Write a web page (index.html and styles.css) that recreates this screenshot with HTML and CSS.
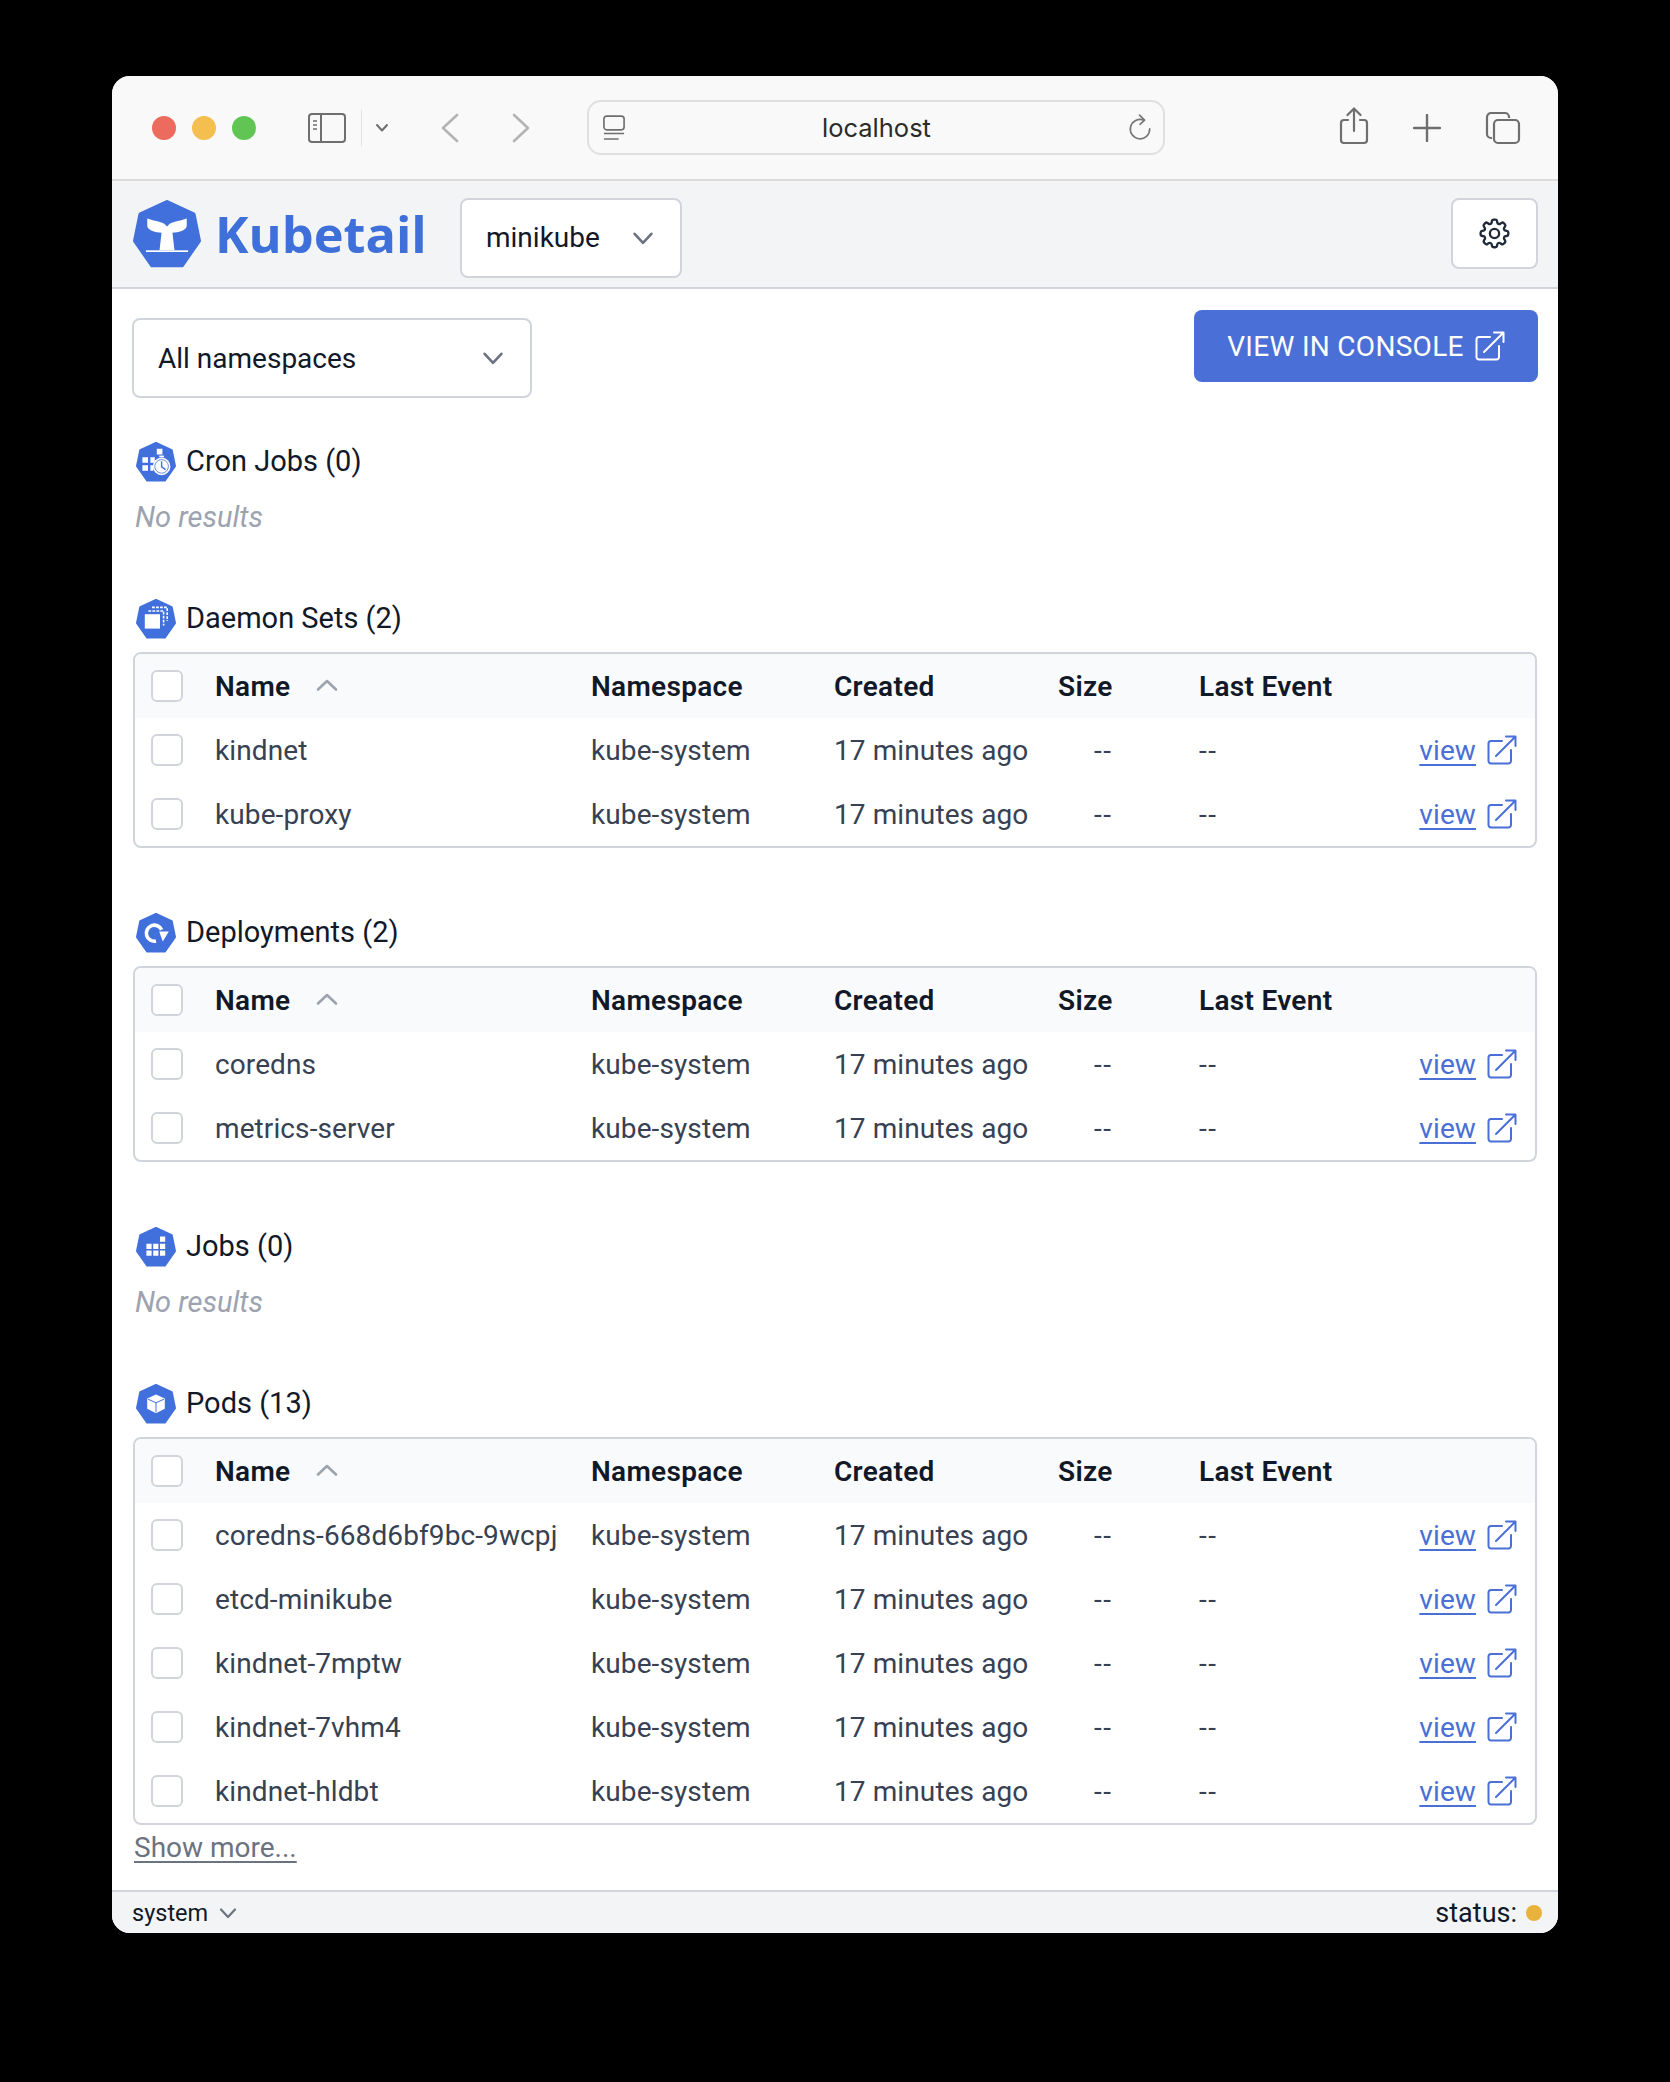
FILE: index.html
```html
<!DOCTYPE html>
<html lang="en">

<head>
    <meta charset="UTF-8" />
    <title>Kubetail</title>
    <link rel="stylesheet" href="styles.css">
</head>

<body>
    <svg class="defs" width="0" height="0">
        <defs>
            <symbol id="hept" viewBox="0 0 100 100">
                <path d="M50 3 L89 21 L97 60 L72 96 L28 96 L3 60 L11 21 Z" fill="#4170dc" stroke="#4170dc" stroke-width="6" stroke-linejoin="round" />
            </symbol>
            <symbol id="ext" viewBox="0 0 30 30">
                <path d="M15 6H4a2.500 2.500 0 0 0-2.500 2.500V26A2.500 2.500 0 0 0 4 28.500h17.500A2.500 2.500 0 0 0 24 26V15M9 21 28 2M19 1.500h9.500V11" fill="none" stroke="currentColor" stroke-width="2" stroke-linecap="round" stroke-linejoin="round" />
            </symbol>
            <symbol id="chev" viewBox="0 0 20 20">
                <path d="M3 6.500 10 14l7-7.500" fill="none" stroke="currentColor" stroke-width="2.200" stroke-linecap="round" stroke-linejoin="round" />
            </symbol>
        </defs>
    </svg>

    <div class="window">
        <div class="toolbar">
            <div class="lights">
                <span class="light red"></span>
                <span class="light yellow"></span>
                <span class="light green"></span>
            </div>
            <svg class="tb-icon sidebar-icon" viewBox="0 0 38 30"><rect x="1" y="1" width="36" height="28" rx="3" fill="none" stroke="#6f6f6f" stroke-width="2" /><path d="M13 1v28" stroke="#6f6f6f" stroke-width="2" /><path d="M5 8h4M5 12h4M5 16h4" stroke="#6f6f6f" stroke-width="1.600" /></svg>
            <span class="tb-sep"></span>
            <svg class="tb-chev" viewBox="0 0 14 10"><path d="M2 2l5 5.500L12 2" fill="none" stroke="#6f6f6f" stroke-width="2" stroke-linecap="round" stroke-linejoin="round" /></svg>
            <svg class="tb-nav" viewBox="0 0 20 30"><path d="M17 2 3 15l14 13" fill="none" stroke="#b4b4b4" stroke-width="2.600" stroke-linecap="round" stroke-linejoin="round" /></svg>
            <svg class="tb-nav forward" viewBox="0 0 20 30"><path d="m3 2 14 13L3 28" fill="none" stroke="#b4b4b4" stroke-width="2.600" stroke-linecap="round" stroke-linejoin="round" /></svg>
            <div class="address">
                <svg class="site-icon" viewBox="0 0 24 28"><rect x="1" y="1" width="22" height="15" rx="3" fill="none" stroke="#6f6f6f" stroke-width="1.800" /><path d="M1 20h22M1 26h16" stroke="#6f6f6f" stroke-width="1.800" /></svg>
                <span class="address-text">localhost</span>
                <svg class="reload" viewBox="0 0 26 30"><path d="M17 6.500A10.500 10.500 0 1 0 23.500 16" fill="none" stroke="#777" stroke-width="1.800" stroke-linecap="round" /><path d="M12.500 1 18 6.500 13 11" fill="none" stroke="#777" stroke-width="1.800" stroke-linecap="round" stroke-linejoin="round" /></svg>
            </div>
            <div class="tb-right">
                <svg class="share" viewBox="0 0 30 38"><path d="M9 13H5a3 3 0 0 0-3 3v17a3 3 0 0 0 3 3h20a3 3 0 0 0 3-3V16a3 3 0 0 0-3-3h-4M15 24V2M8.500 8 15 1.500 21.500 8" fill="none" stroke="#6f6f6f" stroke-width="2.200" stroke-linecap="round" stroke-linejoin="round" /></svg>
                <svg class="plus" viewBox="0 0 28 28"><path d="M14 1v26M1 14h26" fill="none" stroke="#6f6f6f" stroke-width="2.400" stroke-linecap="round" /></svg>
                <svg class="tabs" viewBox="0 0 36 34"><path d="M7 27H6a4 4 0 0 1-4-4V6a4 4 0 0 1 4-4h14a4 4 0 0 1 4 4v1" fill="none" stroke="#6f6f6f" stroke-width="2.200" /><rect x="9" y="9" width="25" height="23" rx="4" fill="none" stroke="#6f6f6f" stroke-width="2.200" /></svg>
            </div>
        </div>

        <header class="app-header">
            <svg class="logo" viewBox="0 0 100 100">
                <use href="#hept" />
                <path d="M21 27C26 30 38 31 46 35L50 39 54 35C62 31 74 30 79 27V38C79 45 66 48 58 48L61 74H39L42 48C34 48 21 45 21 38Z" fill="#fff" />
                <rect x="19" y="74" width="62" height="2.500" fill="#fff" />
            </svg>
            <span class="brand">Kubetail</span>
            <button class="select cluster-select">minikube <svg class="select-chev"><use href="#chev" /></svg></button>
            <button class="gear-btn">
                <svg class="gear" viewBox="0 0 24 24"><path d="M10.340 3.940c.090-.540.560-.940 1.110-.940h1.100c.550 0 1.020.400 1.110.940l.150.890c.070.420.380.760.770.920.390.160.840.140 1.190-.110l.730-.520c.450-.320 1.060-.270 1.450.120l.770.780c.390.390.440 1 .120 1.450l-.520.730c-.250.350-.270.800-.110 1.190.160.390.500.700.920.770l.890.150c.540.090.940.560.940 1.110v1.090c0 .550-.400 1.020-.940 1.110l-.890.150c-.420.070-.760.380-.920.770-.160.390-.140.840.110 1.190l.520.730c.320.450.270 1.060-.120 1.450l-.770.770c-.390.390-1 .440-1.450.120l-.730-.520c-.350-.250-.800-.270-1.190-.110-.390.160-.700.500-.770.920l-.150.890c-.090.540-.560.940-1.110.940h-1.100c-.550 0-1.020-.400-1.110-.940l-.150-.890c-.070-.420-.380-.760-.770-.920-.390-.160-.840-.140-1.190.110l-.730.520c-.450.320-1.060.270-1.450-.120l-.770-.770c-.390-.390-.440-1-.120-1.450l.520-.730c.250-.350.270-.800.110-1.190-.160-.390-.500-.700-.920-.770l-.890-.150C3.400 13.570 3 13.100 3 12.550v-1.090c0-.550.400-1.020.940-1.110l.890-.150c.420-.070.760-.380.920-.770.160-.390.140-.840-.110-1.190l-.520-.730c-.320-.450-.270-1.060.120-1.450l.770-.780c.390-.390 1-.440 1.450-.120l.730.520c.350.250.800.270 1.190.110.390-.160.700-.500.770-.920z" fill="none" stroke="#1f2937" stroke-width="1.500" /><circle cx="12" cy="12" r="3" fill="none" stroke="#1f2937" stroke-width="1.500" /></svg>
            </button>
        </header>

        <main class="content">
            <div class="top-row">
                <button class="select ns-select">All namespaces <svg class="select-chev"><use href="#chev" /></svg></button>
                <button class="console-btn">VIEW IN CONSOLE <svg class="console-icon"><use href="#ext" /></svg></button>
            </div>

            <section class="group">
                <h3 class="group-title">
                    <svg class="kind-icon" viewBox="0 0 100 100">
                        <use href="#hept" />
                        <path d="M52 17h14v14H52zM16 38h14v14H16zM36 38h11v14H36zM16 58h14v14H16zM36 58h7v14h-7z" fill="#fff" />
                        <circle cx="64" cy="61" r="22" fill="#fff" />
                        <circle cx="64" cy="61" r="17" fill="none" stroke="#4170dc" stroke-width="2" />
                        <path d="M64 48v14l10 7" fill="none" stroke="#4170dc" stroke-width="3.500" />
                        <rect x="58" y="34" width="12" height="4" fill="#fff" />
                    </svg>
                    Cron Jobs (0)
                </h3>
                <p class="no-results">No results</p>
            </section>

            <section class="group">
                <h3 class="group-title">
                    <svg class="kind-icon" viewBox="0 0 100 100">
                        <use href="#hept" />
                        <path d="M40 21h38v34" fill="none" stroke="#fff" stroke-width="4" stroke-dasharray="7 3" />
                        <path d="M31 30h38v36" fill="none" stroke="#fff" stroke-width="4" stroke-dasharray="7 3" />
                        <path d="M22 38h38v36H22z" fill="#fff" />
                    </svg>
                    Daemon Sets (2)
                </h3>
                <div class="table-wrap">
                    <table>
                        <thead>
                            <tr>
                                <th class="col-check"><span class="checkbox"></span></th>
                                <th class="col-name">Name <svg class="sort-icon" viewBox="0 0 22 14"><path d="M2 11.500 11 3l9 8.500" fill="none" stroke="#9ca3af" stroke-width="2.600" stroke-linecap="round" stroke-linejoin="round" /></svg></th>
                                <th class="col-ns">Namespace</th>
                                <th class="col-created">Created</th>
                                <th class="col-size">Size</th>
                                <th class="col-event">Last Event</th>
                                <th class="col-view"></th>
                            </tr>
                        </thead>
                        <tbody>
                            <tr>
                                <td><span class="checkbox"></span></td>
                                <td>kindnet</td>
                                <td>kube-system</td>
                                <td>17 minutes ago</td>
                                <td class="dash size-dash">--</td>
                                <td class="dash">--</td>
                                <td class="view-cell"><a class="view-link">view</a><svg class="view-icon"><use href="#ext" /></svg></td>
                            </tr>
                            <tr>
                                <td><span class="checkbox"></span></td>
                                <td>kube-proxy</td>
                                <td>kube-system</td>
                                <td>17 minutes ago</td>
                                <td class="dash size-dash">--</td>
                                <td class="dash">--</td>
                                <td class="view-cell"><a class="view-link">view</a><svg class="view-icon"><use href="#ext" /></svg></td>
                            </tr>
                        </tbody>
                    </table>
                </div>
            </section>

            <section class="group">
                <h3 class="group-title">
                    <svg class="kind-icon" viewBox="0 0 100 100">
                        <use href="#hept" />
                        <path d="M64 42A20 20 0 1 0 50 70" fill="none" stroke="#fff" stroke-width="9" />
                        <path d="M58 46 L82 46 L67 71 Z" fill="#fff" />
                    </svg>
                    Deployments (2)
                </h3>
                <div class="table-wrap">
                    <table>
                        <thead>
                            <tr>
                                <th class="col-check"><span class="checkbox"></span></th>
                                <th class="col-name">Name <svg class="sort-icon" viewBox="0 0 22 14"><path d="M2 11.500 11 3l9 8.500" fill="none" stroke="#9ca3af" stroke-width="2.600" stroke-linecap="round" stroke-linejoin="round" /></svg></th>
                                <th class="col-ns">Namespace</th>
                                <th class="col-created">Created</th>
                                <th class="col-size">Size</th>
                                <th class="col-event">Last Event</th>
                                <th class="col-view"></th>
                            </tr>
                        </thead>
                        <tbody>
                            <tr>
                                <td><span class="checkbox"></span></td>
                                <td>coredns</td>
                                <td>kube-system</td>
                                <td>17 minutes ago</td>
                                <td class="dash size-dash">--</td>
                                <td class="dash">--</td>
                                <td class="view-cell"><a class="view-link">view</a><svg class="view-icon"><use href="#ext" /></svg></td>
                            </tr>
                            <tr>
                                <td><span class="checkbox"></span></td>
                                <td>metrics-server</td>
                                <td>kube-system</td>
                                <td>17 minutes ago</td>
                                <td class="dash size-dash">--</td>
                                <td class="dash">--</td>
                                <td class="view-cell"><a class="view-link">view</a><svg class="view-icon"><use href="#ext" /></svg></td>
                            </tr>
                        </tbody>
                    </table>
                </div>
            </section>

            <section class="group">
                <h3 class="group-title">
                    <svg class="kind-icon" viewBox="0 0 100 100">
                        <use href="#hept" />
                        <path d="M60 24h13v13H60zM26 42h13v13H26zM43 42h13v13H43zM60 42h13v13H60zM26 59h13v13H26zM43 59h13v13H43zM60 59h13v13H60z" fill="#fff" />
                    </svg>
                    Jobs (0)
                </h3>
                <p class="no-results">No results</p>
            </section>

            <section class="group last-group">
                <h3 class="group-title">
                    <svg class="kind-icon" viewBox="0 0 100 100">
                        <use href="#hept" />
                        <path d="M50 26 72 36V62L50 73 28 62V36Z" fill="#fff" />
                        <path d="M30 38 50 47 70 38M50 47V71" fill="none" stroke="#4170dc" stroke-width="2.500" />
                    </svg>
                    Pods (13)
                </h3>
                <div class="table-wrap">
                    <table>
                        <thead>
                            <tr>
                                <th class="col-check"><span class="checkbox"></span></th>
                                <th class="col-name">Name <svg class="sort-icon" viewBox="0 0 22 14"><path d="M2 11.500 11 3l9 8.500" fill="none" stroke="#9ca3af" stroke-width="2.600" stroke-linecap="round" stroke-linejoin="round" /></svg></th>
                                <th class="col-ns">Namespace</th>
                                <th class="col-created">Created</th>
                                <th class="col-size">Size</th>
                                <th class="col-event">Last Event</th>
                                <th class="col-view"></th>
                            </tr>
                        </thead>
                        <tbody>
                            <tr>
                                <td><span class="checkbox"></span></td>
                                <td>coredns-668d6bf9bc-9wcpj</td>
                                <td>kube-system</td>
                                <td>17 minutes ago</td>
                                <td class="dash size-dash">--</td>
                                <td class="dash">--</td>
                                <td class="view-cell"><a class="view-link">view</a><svg class="view-icon"><use href="#ext" /></svg></td>
                            </tr>
                            <tr>
                                <td><span class="checkbox"></span></td>
                                <td>etcd-minikube</td>
                                <td>kube-system</td>
                                <td>17 minutes ago</td>
                                <td class="dash size-dash">--</td>
                                <td class="dash">--</td>
                                <td class="view-cell"><a class="view-link">view</a><svg class="view-icon"><use href="#ext" /></svg></td>
                            </tr>
                            <tr>
                                <td><span class="checkbox"></span></td>
                                <td>kindnet-7mptw</td>
                                <td>kube-system</td>
                                <td>17 minutes ago</td>
                                <td class="dash size-dash">--</td>
                                <td class="dash">--</td>
                                <td class="view-cell"><a class="view-link">view</a><svg class="view-icon"><use href="#ext" /></svg></td>
                            </tr>
                            <tr>
                                <td><span class="checkbox"></span></td>
                                <td>kindnet-7vhm4</td>
                                <td>kube-system</td>
                                <td>17 minutes ago</td>
                                <td class="dash size-dash">--</td>
                                <td class="dash">--</td>
                                <td class="view-cell"><a class="view-link">view</a><svg class="view-icon"><use href="#ext" /></svg></td>
                            </tr>
                            <tr>
                                <td><span class="checkbox"></span></td>
                                <td>kindnet-hldbt</td>
                                <td>kube-system</td>
                                <td>17 minutes ago</td>
                                <td class="dash size-dash">--</td>
                                <td class="dash">--</td>
                                <td class="view-cell"><a class="view-link">view</a><svg class="view-icon"><use href="#ext" /></svg></td>
                            </tr>
                        </tbody>
                    </table>
                </div>
                <a class="show-more">Show more...</a>
            </section>
        </main>

        <footer class="app-footer">
            <span class="theme">system <svg class="theme-chev"><use href="#chev" /></svg></span>
            <span class="status">status: <span class="status-dot"></span></span>
        </footer>
    </div>
</body>

</html>
```

FILE: styles.css
```css
* {
    box-sizing: border-box;
    font-family: 'Roboto', sans-serif;
}

html {
    background: #000;
}

body {
    margin: 0;
    padding: 76px 112px 149px;
    background: #000;
    color: #111827;
}

.defs {
    position: absolute;
}

.window {
    height: 1857px;
    display: flex;
    flex-direction: column;
    background: #fff;
    border-radius: 18px;
    overflow: hidden;
}

/* browser chrome */
.toolbar {
    height: 105px;
    flex: none;
    display: flex;
    align-items: center;
    padding: 0 0 0 40px;
    background: #f9f9fa;
    border-bottom: 2px solid #dcdcdc;
}

.lights {
    display: flex;
    gap: 16px;
}

.light {
    width: 24px;
    height: 24px;
    border-radius: 50%;
}

.red { background: #ec6a5e; }
.yellow { background: #f4bf4f; }
.green { background: #61c554; }

.tb-icon {
    width: 38px;
    height: 30px;
    margin-left: 52px;
}

.tb-sep {
    width: 1px;
    height: 36px;
    margin-left: 15px;
    background: #e2e2e2;
}

.tb-chev {
    width: 14px;
    height: 10px;
    margin-left: 13px;
}

.tb-nav {
    width: 20px;
    height: 30px;
    margin-left: 51px;
}

.tb-nav.forward {
    margin-left: 51px;
}

.address {
    width: 578px;
    height: 55px;
    margin-left: 56px;
    display: flex;
    align-items: center;
    padding: 0 11px 0 14px;
    border: 2px solid #e0e0e0;
    border-radius: 14px;
}

.site-icon {
    width: 22px;
    height: 28px;
}

.address-text {
    flex: 1;
    text-align: center;
    font-family: 'Inter', sans-serif;
    font-size: 25.500px;
    color: #2b2b2b;
}

.reload {
    width: 24px;
    height: 28px;
}

.tb-right {
    display: flex;
    align-items: center;
    margin-left: 174px;
    gap: 44px;
}

.share {
    width: 30px;
    height: 38px;
    margin-top: -4px;
}

.plus {
    width: 28px;
    height: 28px;
}

.tabs {
    width: 36px;
    height: 34px;
}

/* app header */
.app-header {
    height: 108px;
    flex: none;
    display: flex;
    align-items: center;
    padding: 0 20px;
    background: #f3f4f6;
    border-bottom: 2px solid #d1d5db;
}

.logo {
    width: 70px;
    height: 68px;
}

.brand {
    margin-left: 13px;
    width: 229px;
    font-family: 'Open Sans', sans-serif;
    font-size: 50.500px;
    font-weight: 700;
    color: #3f6fd8;
    line-height: 1;
}

.select {
    display: flex;
    align-items: center;
    justify-content: space-between;
    height: 80px;
    padding: 0 25px 0 24px;
    background: #fff;
    border: 2px solid #d1d5db;
    border-radius: 8px;
    font-size: 28px;
    color: #111827;
}

.cluster-select {
    width: 222px;
    margin-left: 16px;
    margin-top: 7px;
}

.select-chev {
    width: 24px;
    height: 24px;
    color: #6b7280;
}

.gear-btn {
    width: 87px;
    height: 71px;
    margin-left: auto;
    margin-top: -1px;
    display: flex;
    align-items: center;
    justify-content: center;
    padding: 0;
    background: #fff;
    border: 2px solid #d1d5db;
    border-radius: 8px;
}

.gear {
    width: 37px;
    height: 37px;
}

/* content */
.content {
    flex: 1;
    min-height: 0;
    padding: 21px 20px 0;
}

.top-row {
    display: flex;
    justify-content: space-between;
    align-items: flex-start;
    height: 132px;
}

.ns-select {
    width: 400px;
    margin-top: 8px;
}

.console-btn {
    display: flex;
    align-items: center;
    justify-content: center;
    gap: 11px;
    width: 344px;
    height: 72px;
    border: none;
    border-radius: 8px;
    background: #4a6fd6;
    color: #fff;
    font-size: 28px;
    letter-spacing: 0.300px;
}

.console-icon {
    width: 30px;
    height: 30px;
}

.group {
    margin-bottom: 65px;
}

.last-group {
    margin-bottom: 0;
}

.group-title {
    display: flex;
    align-items: center;
    gap: 9px;
    height: 40px;
    padding-bottom: 3px;
    margin: 0 0 13px 3px;
    font-size: 29px;
    font-weight: 400;
    color: #111827;
}

.kind-icon {
    width: 42px;
    height: 40px;
    margin-top: 3px;
    flex: none;
}

.no-results {
    margin: 0 0 0 3px;
    height: 39px;
    line-height: 44px;
    font-size: 29px;
    font-style: italic;
    color: #9ca3af;
}

.table-wrap {
    margin: 0 1px;
    border: 2px solid #d1d5db;
    border-radius: 8px;
    overflow: hidden;
}

table {
    width: 100%;
    border-collapse: collapse;
    table-layout: fixed;
}

th,
td {
    padding: 0;
    text-align: left;
    font-size: 28px;
    letter-spacing: 0.100px;
    color: #374151;
    height: 64px;
    white-space: nowrap;
}

th {
    font-weight: 600;
    letter-spacing: 0.300px;
    color: #111827;
    background: #f9fafb;
}

.col-check { width: 80px; }
.col-name { width: 376px; }
.col-ns { width: 243px; }
.col-created { width: 224px; }
.col-size { width: 141px; }
.col-event { width: 200px; }

.checkbox {
    display: block;
    width: 32px;
    height: 32px;
    margin-left: 16px;
    background: #fff;
    border: 2px solid #d1d5db;
    border-radius: 6px;
}

.sort-icon {
    width: 22px;
    height: 14px;
    margin-left: 18px;
    vertical-align: 4px;
}

td.dash {
    letter-spacing: 1.500px;
}

td.size-dash {
    padding-left: 36px;
}

.view-cell {
    text-align: right;
    padding-right: 18px;
}

.view-link {
    color: #4a6fd6;
    text-decoration: underline;
    text-underline-offset: 4px;
}

.view-icon {
    width: 30px;
    height: 30px;
    margin-left: 11px;
    color: #4a6fd6;
    vertical-align: -5px;
}

.show-more {
    display: block;
    margin: 6px 0 0 2px;
    font-size: 28px;
    color: #6b7280;
    text-decoration: underline;
    text-underline-offset: 4px;
}

/* footer */
.app-footer {
    height: 43px;
    flex: none;
    display: flex;
    justify-content: space-between;
    align-items: center;
    padding: 0 16px 0 20px;
    background: #f3f4f6;
    border-top: 2px solid #d1d5db;
    font-size: 23.500px;
}

.theme {
    display: flex;
    align-items: center;
    gap: 10px;
}

.theme-chev {
    width: 20px;
    height: 20px;
    color: #6b7280;
}

.status {
    display: flex;
    align-items: center;
    gap: 9px;
    font-size: 27px;
}

.status-dot {
    width: 16px;
    height: 16px;
    border-radius: 50%;
    background: #e9b23c;
}
```
